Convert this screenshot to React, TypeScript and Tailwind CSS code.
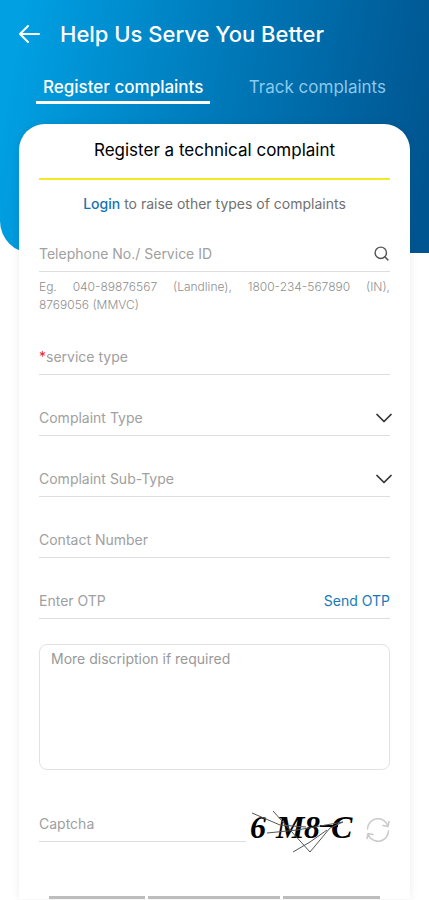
import type { ReactNode } from 'react'
import { ChevronDown, Search } from 'lucide-react'

interface FieldProps {
  id: string
  label: string
  type?: string
  required?: boolean
  children?: ReactNode
}

function Field({ id, label, type = 'text', required = false, children }: FieldProps) {
  return (
    <div className="flex h-9 items-center border-b border-[#dedede]">
      {required && <label htmlFor={id} className="text-[#e02b2b]">*</label>}
      <input
        id={id}
        type={type}
        placeholder={label}
        aria-label={label}
        required={required}
        className="min-w-0 flex-1 bg-transparent text-[#444444] outline-none placeholder:text-[#a0a0a0]"
      />
      {children}
    </div>
  )
}

function SelectField({ id, label }: { id: string; label: string }) {
  return (
    <div className="flex h-9 items-center border-b border-[#dedede]">
      <select id={id} defaultValue="" aria-label={label} className="min-w-0 flex-1 appearance-none bg-transparent text-[#a0a0a0] outline-none">
        <option value="">{label}</option>
      </select>
      <ChevronDown size={28} strokeWidth={1.5} className="-mr-2 shrink-0 text-[#333333]" aria-hidden="true" />
    </div>
  )
}

function CaptchaCode() {
  return (
    <div className="h-10 w-28 shrink-0">
      <svg width="112" height="56" viewBox="0 -8 112 56" fill="none" stroke="#555555" strokeWidth="1" role="img" aria-label="Captcha code">
        <g fill="#000000" stroke="none" fontFamily="Liberation Serif, serif" fontSize="32" fontStyle="italic" fontWeight="700">
          <text x="4" y="28">6</text>
          <text x="30" y="28">M</text>
          <text x="58" y="28">8</text>
          <text x="85" y="28">C</text>
        </g>
        <path d="M74 16H92" stroke="#000000" strokeWidth="2" />
        <path d="M6 3L34 15L60 17" />
        <path d="M27 1L64 42L84 18L97 12" />
        <path d="M47 42L64 32L81 20" />
        <path d="M21 23L51 20L97 12" />
      </svg>
    </div>
  )
}

export default function App() {
  return (
    <div className="min-h-screen overflow-x-hidden bg-white font-[Inter,sans-serif] text-sm">
      <header className="h-[253px] rounded-bl-[32px] bg-linear-[100deg,#00a0e3_5%,#0079b9_50%,#00548f_98%] px-[18px] pt-5 text-white">
        <div className="flex h-7 items-center gap-5">
          <button type="button" aria-label="Back">
            <svg width="22" height="20" viewBox="0 0 22 20" fill="none" stroke="currentColor" strokeWidth="2" strokeLinecap="round" strokeLinejoin="round" aria-hidden="true">
              <path d="M21 10H2M10 2L2 10l8 8" />
            </svg>
          </button>
          <h1 className="text-[22px] leading-7 font-medium">Help Us Serve You Better</h1>
        </div>
        <nav className="mt-[25px] flex justify-between px-[18px] text-[17px] leading-7 font-medium">
          <a href="#register" aria-current="page" className="border-b-3 border-white px-[7px] text-white">Register complaints</a>
          <a href="#track" className="px-[7px] font-normal text-[#8cc9ec]">Track complaints</a>
        </nav>
      </header>

      <main className="mx-[19px] -mt-[129px] rounded-t-[26px] bg-white px-5 pt-3 shadow-[0_0_8px_rgba(0,0,0,0.08)]">
        <h2 className="border-b-2 border-[#f3e925] pb-[14px] text-center text-[17px] leading-7 text-black">
          Register a technical complaint
        </h2>
        <p className="mt-3 text-center text-sm leading-6 text-[#707070]">
          <a href="#login" className="font-medium text-[#1273b5]">Login</a> to raise other types of complaints
        </p>

        <form className="mt-5">
          <Field id="phone" label="Telephone No./ Service ID">
            <button type="button" aria-label="Search" className="text-[#555555]">
              <Search size={17} strokeWidth={2} />
            </button>
          </Field>
          <p className="mt-[6px] text-justify text-xs leading-[18px] font-light text-[#8f8f8f]">
            Eg. 040-89876567 (Landline), 1800-234-567890 (IN), 8769056 (MMVC)
          </p>

          <div className="mt-[25px] flex flex-col gap-[25px]">
            <Field id="service" label="service type" required />
            <SelectField id="complaint" label="Complaint Type" />
            <SelectField id="subtype" label="Complaint Sub-Type" />
            <Field id="contact" label="Contact Number" type="tel" />
            <Field id="otp" label="Enter OTP">
              <button type="button" className="text-[#1879b8]">Send OTP</button>
            </Field>
            <textarea
              aria-label="More discription if required"
              placeholder="More discription if required"
              className="h-[126px] w-full resize-none rounded-lg border border-[#e2e2e2] px-[11px] py-1 leading-5 text-[#444444] outline-none placeholder:text-[#999999]"
            />
          </div>

          <div className="mt-8 flex items-end">
            <div className="min-w-0 flex-1">
              <Field id="captcha" label="Captcha" />
            </div>
            <CaptchaCode />
            <button type="button" aria-label="Refresh captcha" className="ml-2 text-[#c9c9c9]">
              <svg width="24" height="24" viewBox="0 0 24 24" fill="none" stroke="currentColor" strokeWidth="1.5" strokeLinecap="round" strokeLinejoin="round" aria-hidden="true">
                <path d="M1.500 11A10.500 10.500 0 0 1 22 8M23 3.500L22 8.500L17 7.500M22.500 13A10.500 10.500 0 0 1 2 16M1 20.500L2 15.500L7 16.500" />
              </svg>
            </button>
          </div>
        </form>

        <div className="mt-[54px] grid grid-cols-[97fr_134fr_98fr] gap-[3px] px-[10px]">
          <div className="h-[3px] bg-[#bdbdbd]" />
          <div className="h-[3px] bg-[#bdbdbd]" />
          <div className="h-[3px] bg-[#bdbdbd]" />
        </div>
      </main>
    </div>
  )
}
